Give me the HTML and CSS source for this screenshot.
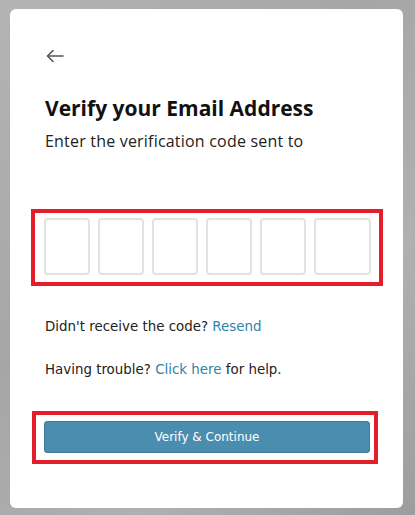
FILE: index.html
```html
<!DOCTYPE html>
<html lang="en">
<head>
    <meta charset="UTF-8">
    <meta name="viewport" content="width=device-width, initial-scale=1.0">
    <title>Verify your Email Address</title>
    <link rel="stylesheet" href="styles.css">
</head>
<body>
    <div class="card">
        <button class="back" aria-label="Back">
            <svg width="18" height="14" viewBox="0 0 18 14" fill="none" stroke="#555" stroke-width="1.6" stroke-linecap="round" stroke-linejoin="round">
                <path d="M17 7H2"/>
                <path d="M7 1.5L1.5 7L7 12.5"/>
            </svg>
        </button>
        <h1>Verify your Email Address</h1>
        <p class="subtitle">Enter the verification code sent to</p>

        <div class="highlight code-box">
            <div class="code-inputs">
                <input type="text" maxlength="1">
                <input type="text" maxlength="1">
                <input type="text" maxlength="1">
                <input type="text" maxlength="1">
                <input type="text" maxlength="1">
                <input type="text" maxlength="1" class="last">
            </div>
        </div>

        <p class="help">Didn't receive the code? <a href="#">Resend</a></p>
        <p class="help">Having trouble? <a href="#">Click here</a> for help.</p>

        <div class="highlight button-box">
            <button class="verify">Verify &amp; Continue</button>
        </div>
    </div>
</body>
</html>
```

FILE: styles.css
```css
body {
    margin: 0;
    padding: 9px 12px 7px 10px;
    background: linear-gradient(135deg, #b4b4b4 0%, #a6a6a6 40%, #b0b0b0 70%, #9d9d9d 100%);
    font-family: "DejaVu Sans", Verdana, sans-serif;
    height: 515px;
    box-sizing: border-box;
}
.card {
    background: #fff;
    border-radius: 6px;
    height: 499px;
    box-sizing: border-box;
    padding: 40px 20px 0 21px;
}
.back {
    background: none;
    border: none;
    padding: 0;
    margin-left: 15px;
    display: block;
    cursor: pointer;
    height: 14px;
}
h1 {
    font-family: "Open Sans", sans-serif;
    font-size: 21px;
    font-weight: 700;
    color: #111;
    margin: 33px 0 0 14px;
    line-height: 24px;
}
.subtitle {
    font-family: "Open Sans", sans-serif;
    font-size: 16px;
    letter-spacing: 0.2px;
    color: #222;
    margin: 11px 0 0 14px;
    line-height: 20px;
}
.highlight {
    border: 4px solid #e31e2a;
}
.code-box {
    margin-top: 58px;
    padding: 5px 8px 7px 9px;
}
.code-inputs {
    display: flex;
    gap: 8px;
}
.code-inputs input {
    width: 46px;
    height: 57px;
    box-sizing: border-box;
    border: 2px solid #e2e2e2;
    border-radius: 4px;
    padding: 0;
    text-align: center;
    font-size: 20px;
}
.code-inputs input.last {
    flex: 1;
}
.help {
    font-size: 13.4px;
    color: #222;
    margin: 0 0 0 14px;
    line-height: 18px;
}
.code-box + .help {
    margin-top: 32px;
}
.help + .help {
    margin-top: 25px;
}
.help a {
    color: #2f84a8;
    text-decoration: none;
}
.button-box {
    margin: 32px 5px 0 1px;
    padding: 6px 4px 7px 8px;
}
.verify {
    display: block;
    width: 100%;
    height: 32px;
    background: #4b8dae;
    border: 1px solid #3e7b9a;
    border-radius: 3px;
    color: #fff;
    font-family: "DejaVu Sans", Verdana, sans-serif;
    font-size: 12px;
    cursor: pointer;
}
```
